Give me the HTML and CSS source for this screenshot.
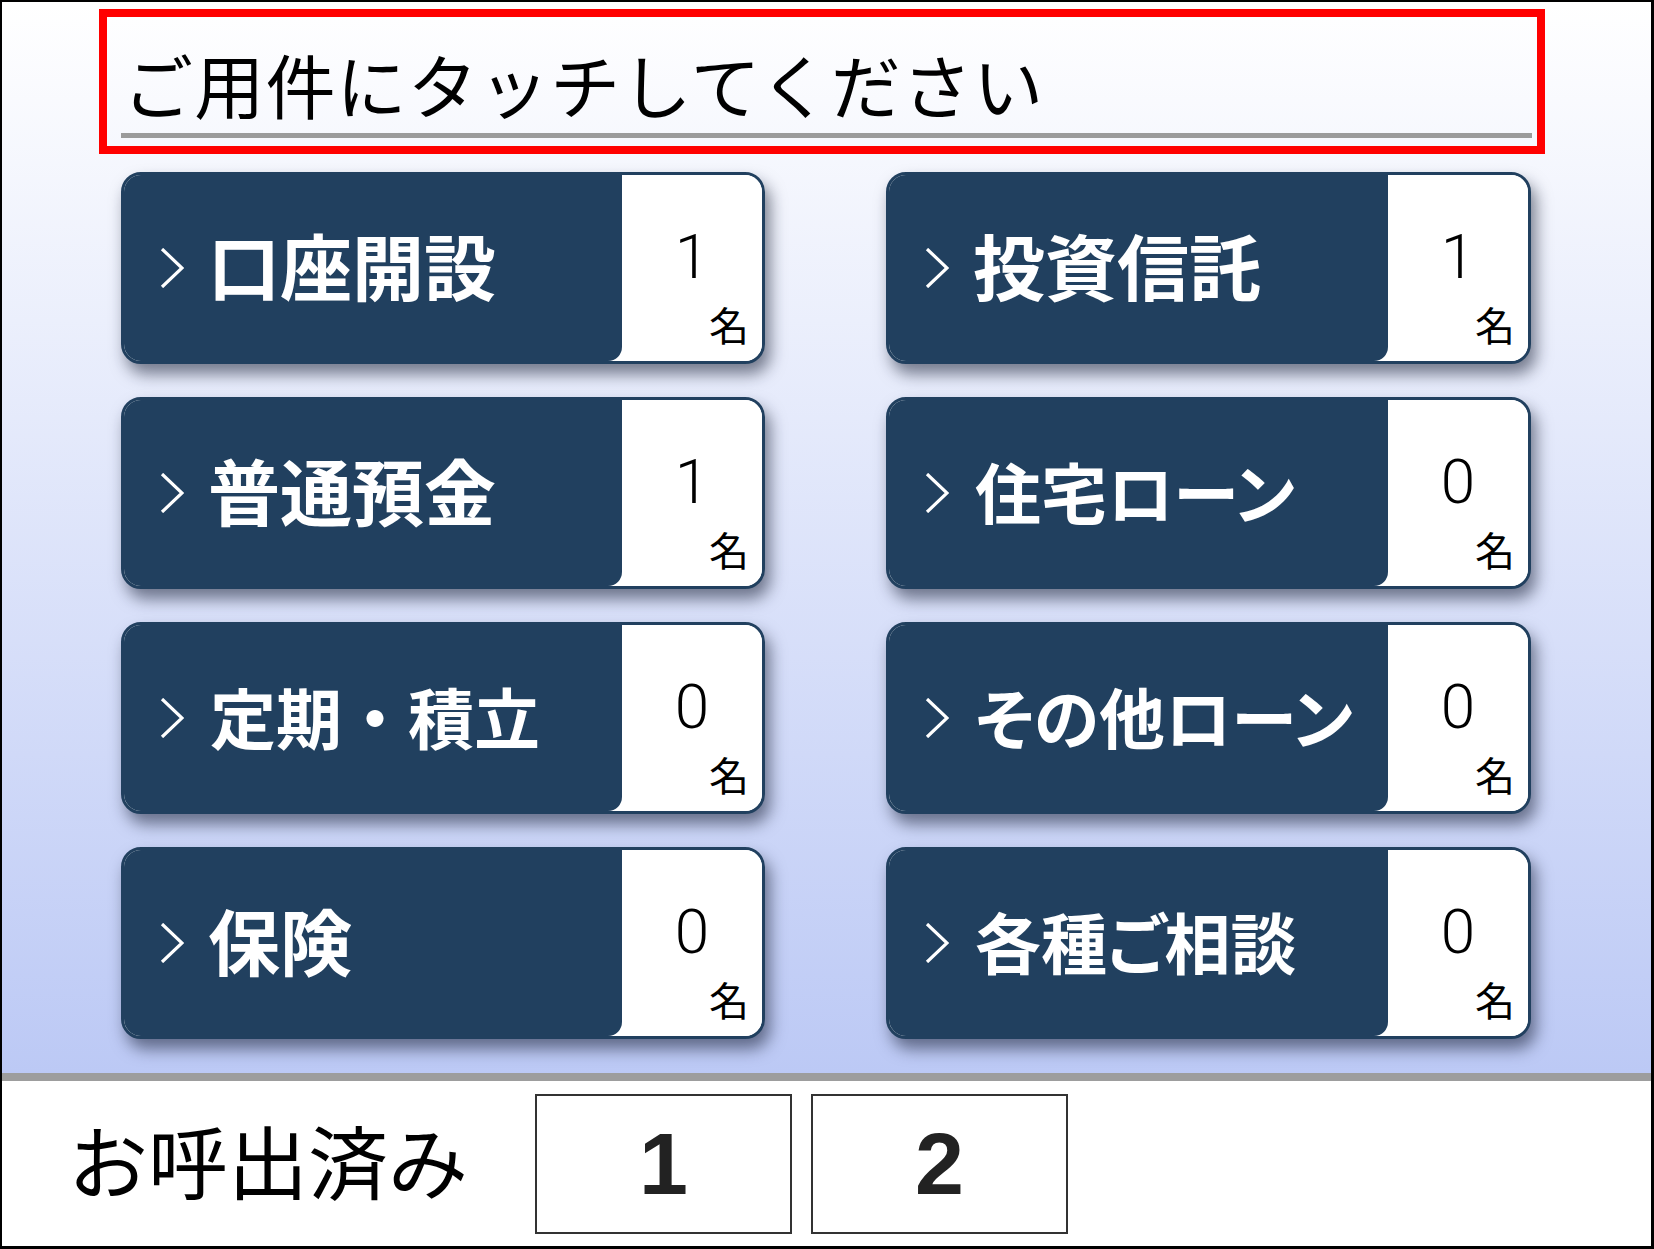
FILE: index.html
```html
<!DOCTYPE html>
<html lang="ja">
<head>
<meta charset="utf-8">
<title>受付</title>
<link rel="stylesheet" href="styles.css">
</head>
<body>
<div class="screen">
  <main class="board">
    <header class="prompt">
      <h1 class="prompt-title">ご用件にタッチしてください</h1>
    </header>
    <div class="menu">
      <div class="card">
        <div class="card-label"><svg class="chev" viewBox="0 0 24 40" width="24" height="40"><polyline points="2,1 22,20 2,39"/></svg><span class="card-text">口座開設</span></div>
        <div class="card-count"><span class="count-num">1</span><span class="count-unit">名</span></div>
      </div>
      <div class="card">
        <div class="card-label"><svg class="chev" viewBox="0 0 24 40" width="24" height="40"><polyline points="2,1 22,20 2,39"/></svg><span class="card-text">投資信託</span></div>
        <div class="card-count"><span class="count-num">1</span><span class="count-unit">名</span></div>
      </div>
      <div class="card">
        <div class="card-label"><svg class="chev" viewBox="0 0 24 40" width="24" height="40"><polyline points="2,1 22,20 2,39"/></svg><span class="card-text">普通預金</span></div>
        <div class="card-count"><span class="count-num">1</span><span class="count-unit">名</span></div>
      </div>
      <div class="card">
        <div class="card-label"><svg class="chev" viewBox="0 0 24 40" width="24" height="40"><polyline points="2,1 22,20 2,39"/></svg><span class="card-text card-text--long">住宅ローン</span></div>
        <div class="card-count"><span class="count-num">0</span><span class="count-unit">名</span></div>
      </div>
      <div class="card">
        <div class="card-label"><svg class="chev" viewBox="0 0 24 40" width="24" height="40"><polyline points="2,1 22,20 2,39"/></svg><span class="card-text card-text--long card-text--mono">定期・積立</span></div>
        <div class="card-count"><span class="count-num">0</span><span class="count-unit">名</span></div>
      </div>
      <div class="card">
        <div class="card-label"><svg class="chev" viewBox="0 0 24 40" width="24" height="40"><polyline points="2,1 22,20 2,39"/></svg><span class="card-text card-text--long">その他ローン</span></div>
        <div class="card-count"><span class="count-num">0</span><span class="count-unit">名</span></div>
      </div>
      <div class="card">
        <div class="card-label"><svg class="chev" viewBox="0 0 24 40" width="24" height="40"><polyline points="2,1 22,20 2,39"/></svg><span class="card-text">保険</span></div>
        <div class="card-count"><span class="count-num">0</span><span class="count-unit">名</span></div>
      </div>
      <div class="card">
        <div class="card-label"><svg class="chev" viewBox="0 0 24 40" width="24" height="40"><polyline points="2,1 22,20 2,39"/></svg><span class="card-text card-text--long">各種ご相談</span></div>
        <div class="card-count"><span class="count-num">0</span><span class="count-unit">名</span></div>
      </div>
    </div>
  </main>
  <div class="sep"></div>
  <footer class="called">
    <span class="called-label">お呼出済み</span>
    <div class="called-list">
      <div class="called-no">1</div>
      <div class="called-no">2</div>
    </div>
  </footer>
</div>
</body>
</html>
```

FILE: styles.css
```css
* {
  box-sizing: border-box;
}

html,
body {
  margin: 0;
  padding: 0;
  background: #fff;
}

body {
  font-family: "Noto Sans CJK JP", "Noto Sans", sans-serif;
  color: #000;
}

/* whole kiosk frame */
.screen {
  width: 1654px;
  height: 1249px;
  border-style: solid;
  border-color: #000;
  border-width: 2px 3px 3px 2px;
  display: flex;
  flex-direction: column;
  background: #fff;
  overflow: hidden;
}

/* upper area with the service menu */
.board {
  height: 1071px;
  flex: none;
  background: linear-gradient(180deg, #ffffff 0%, #bcc9f5 100%);
  padding: 7px 0 0 97px;
}

.prompt {
  width: 1446px;
  height: 145px;
  border: 8px solid #ff0000;
  padding: 32px 5px 0 14px;
}

.prompt-title {
  margin: 0;
  font-weight: 400;
  font-size: 70px;
  line-height: 70px;
  letter-spacing: 1.2px;
  padding: 0 0 14px 2px;
  border-bottom: 5px solid #9b9b9b;
  white-space: nowrap;
}

.menu {
  display: grid;
  grid-template-columns: 644px 645px;
  grid-template-rows: repeat(4, 192px);
  column-gap: 121px;
  row-gap: 33px;
  margin: 18px 0 0 22px;
}

.card {
  display: flex;
  border: 3px solid #21405f;
  border-radius: 20px;
  background: #fff;
  overflow: hidden;
  box-shadow: 5px 10px 16px rgba(20, 28, 50, 0.55);
}

.card-label {
  flex: 1;
  display: flex;
  align-items: center;
  background: #21405f;
  border-bottom-right-radius: 14px;
  padding-left: 36px;
  color: #fff;
}

.chev {
  flex: none;
  fill: none;
  stroke: #fff;
  stroke-width: 3.2;
  stroke-linejoin: miter;
}

.card-text {
  margin-left: 24px;
  padding-bottom: 8px;
  font-size: 72px;
  line-height: 72px;
  font-weight: 700;
  font-feature-settings: "palt";
  white-space: nowrap;
}

/* labels of five or more characters are set a size smaller */
.card-text--long {
  font-size: 66px;
  line-height: 66px;
  padding-bottom: 7px;
  margin-left: 26px;
}

.card-text--mono {
  font-feature-settings: normal;
}

.card-count {
  width: 140px;
  flex: none;
  display: flex;
  flex-direction: column;
  background: #fff;
}

.count-num {
  padding-top: 51px;
  font-family: "Roboto", "Noto Sans", sans-serif;
  font-weight: 300;
  font-size: 62px;
  line-height: 62px;
  text-align: center;
}

.count-unit {
  margin-top: 16px;
  padding-right: 13px;
  font-size: 40px;
  line-height: 40px;
  text-align: right;
}

.sep {
  height: 8px;
  flex: none;
  background: #9d9d9d;
}

/* called numbers strip */
.called {
  flex: 1;
  display: flex;
  align-items: center;
  padding-left: 66px;
  background: #fff;
}

.called-label {
  font-size: 80px;
  line-height: 80px;
  margin: 0 67px 12px 0;
  white-space: nowrap;
}

.called-list {
  display: flex;
  gap: 19px;
}

.called-no {
  width: 257px;
  height: 140px;
  border: 2px solid #333;
  display: flex;
  align-items: center;
  justify-content: center;
  font-family: "Liberation Sans", Arial, sans-serif;
  font-weight: 700;
  font-size: 88px;
  color: #222;
}
```
